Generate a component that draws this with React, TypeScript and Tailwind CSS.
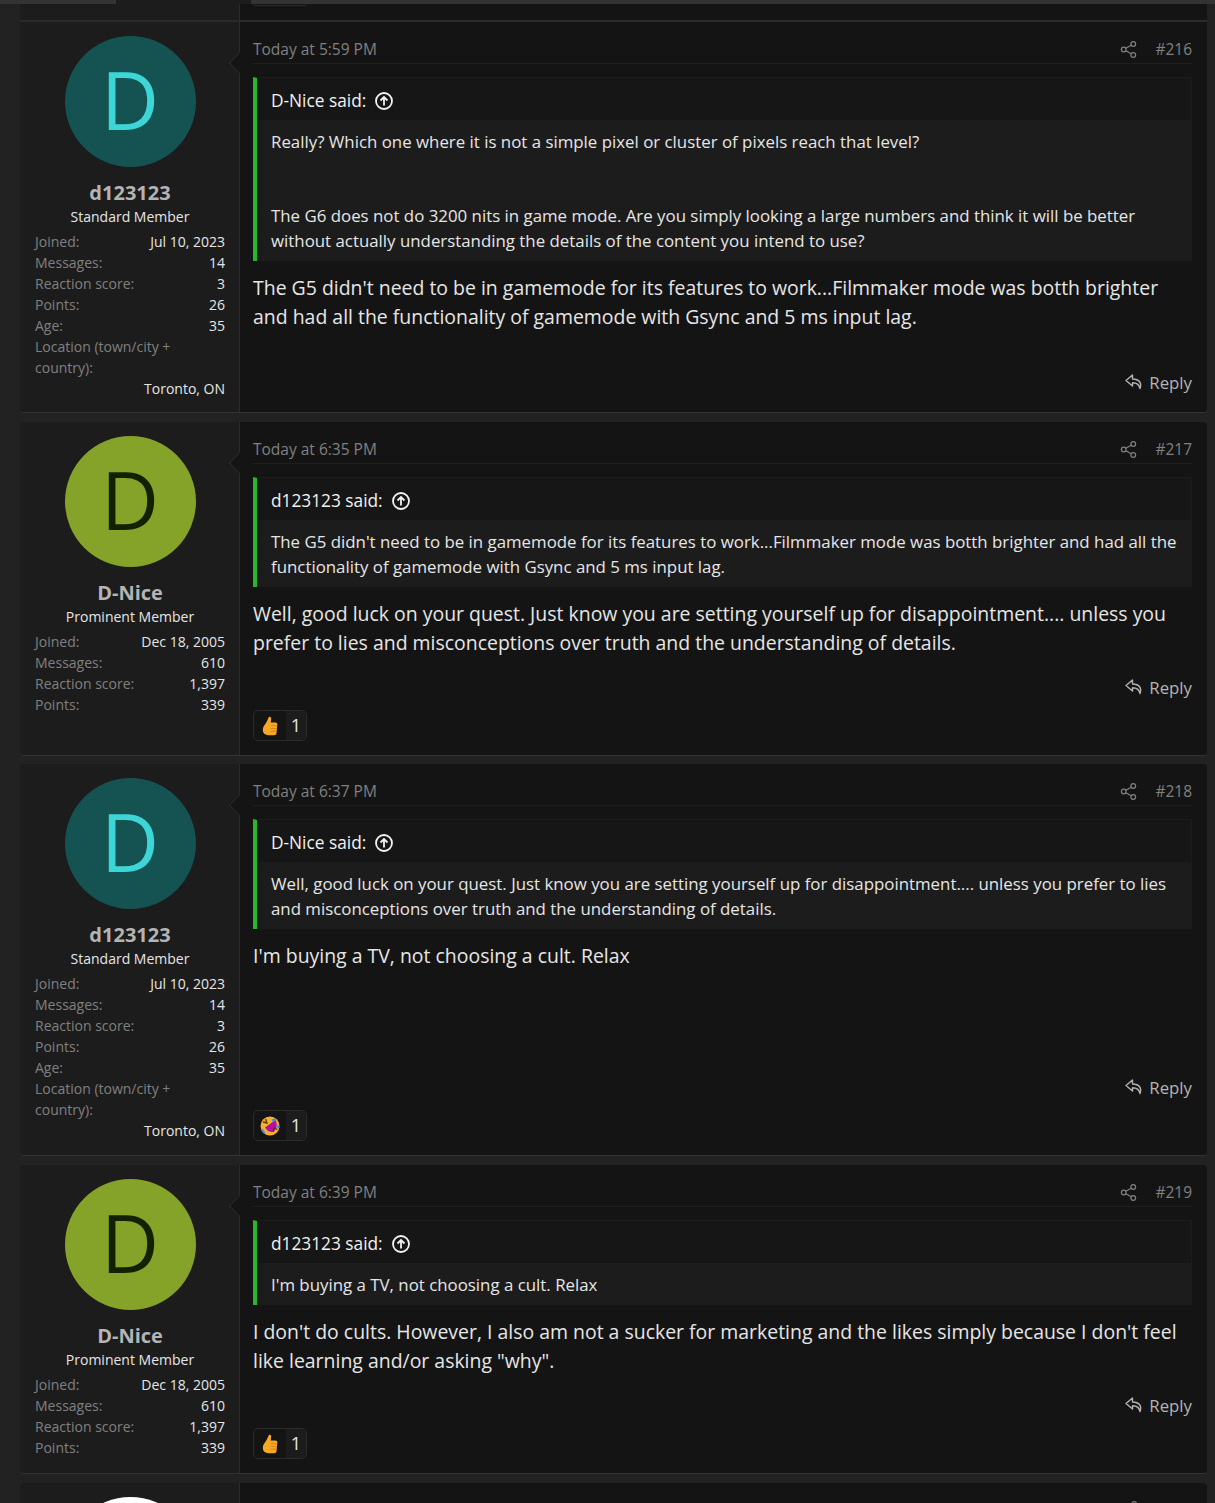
import { Share2 } from "lucide-react";

const font = "font-['Segoe_UI','Open_Sans','Noto_Sans',sans-serif]";

type Stat = [string, string];

const teal = {
  name: "d123123",
  title: "Standard Member",
  bg: "bg-[#155252]",
  fg: "text-[#3dd5d5]",
  stats: [
    ["Joined:", "Jul 10, 2023"],
    ["Messages:", "14"],
    ["Reaction score:", "3"],
    ["Points:", "26"],
    ["Age:", "35"],
  ] as Stat[],
  location: "Toronto, ON",
};

const olive = {
  name: "D-Nice",
  title: "Prominent Member",
  bg: "bg-[#85a329]",
  fg: "text-[#142100]",
  stats: [
    ["Joined:", "Dec 18, 2005"],
    ["Messages:", "610"],
    ["Reaction score:", "1,397"],
    ["Points:", "339"],
  ] as Stat[],
};

type User = typeof olive & { location?: string };

function UserCell({ user }: { user: User }) {
  return (
    <div className="relative flex w-[220px] shrink-0 flex-col border-r border-[#2b2b2b] bg-[#1c1c1c] pt-3.5 pr-[14px] pl-[15px]">
      <div className={`mx-auto flex h-[131px] w-[131px] items-center justify-center rounded-full pb-[6px] ${user.bg} ${user.fg} text-[80px] leading-none`}>
        D
      </div>
      <div className="mt-[14px] text-center text-[20px] leading-[24px] font-bold text-[#b4b4b4]">{user.name}</div>
      <div className="mt-px text-center text-[14px] leading-[21px] text-[#e6e6e6]">{user.title}</div>
      <div className="mt-[4px] text-[14px] leading-[21px]">
        {user.stats.map(([label, value]) => (
          <div key={label} className="flex justify-between">
            <span className="text-[#808080]">{label}</span>
            <span className="text-[#e6e6e6]">{value}</span>
          </div>
        ))}
        {user.location && (
          <>
            <div className="text-[#808080]">
              Location (town/city +<br />
              country):
            </div>
            <div className="text-right text-[#e6e6e6]">{user.location}</div>
          </>
        )}
      </div>
      <div className="absolute top-[29px] right-[-1px] h-[24px] w-[12px] overflow-hidden">
        <div className="absolute top-[4px] left-[4px] h-4 w-4 rotate-45 border-b border-l border-[#2b2b2b] bg-[#141414]" />
      </div>
    </div>
  );
}

function Quote({ author, lines }: { author: string; lines: React.ReactNode }) {
  return (
    <div className="mt-[13px] border-t border-r border-[#1c1c1c] border-l-4 border-l-[#2bb52b] bg-[#1c1c1c]">
      <div className="flex h-[42px] items-center gap-[9px] bg-[#161616] pt-[3px] pl-3.5 text-[17.3px] text-[#f2f2f2]">
        <span>{author} said:</span>
        <svg width="18" height="18" viewBox="0 0 18 18" fill="none" stroke="#f2f2f2" strokeWidth="1.8">
          <circle cx="9" cy="9" r="8" />
          <path d="M9 13.5V5M5.5 8.5 9 5l3.5 3.5" />
        </svg>
      </div>
      <div className="px-3.5 pt-[9px] pb-[8px] text-[16.85px] leading-[25px] text-[#e6e6e6]">{lines}</div>
    </div>
  );
}

function Reaction({ emoji }: { emoji: "thumb" | "rofl" }) {
  return (
    <div className="flex h-[31px] w-[54px] overflow-hidden rounded-[5px] border border-[#2b2b2b] bg-[#141414]">
      <div className="flex w-[32px] items-center justify-center">
        {emoji === "thumb" ? (
          <svg width="16" height="20" viewBox="0 0 16 20">
            <path d="M7 .8c1.400-.6 2.400.5 2.200 2L8.700 6.500h4.800c1.300 0 2 1 1.800 2.200l-.8 8.500c-.2 1.300-1 2-2.400 2H6.500C3 19.200.8 17 .8 14c0-2.500 1-4 2.500-6C4.800 6 6 3 7 .8Z" fill="#f6a825" />
            <path d="M8.500 9.800h6.600M8.500 12.500h6.300M8.500 15.200h6" stroke="#d9861a" strokeWidth="1" />
          </svg>
        ) : (
          <svg width="20" height="20" viewBox="0 0 20 20">
            <circle cx="10" cy="10" r="9.500" fill="#f7b02c" />
            <path d="M5 11.500 15.500 4c1.800 4 1.800 8-1 11-2.500 2.300-6.500 1-9.500-3.500Z" fill="#b3109e" />
            <path d="m3 6 4 1-1.500-4M13 16l1-4 3.500 1.500" fill="none" stroke="#5a3a10" strokeWidth="1.300" />
            <path d="M12 4.500 16 3M16.500 9 19 12M1.500 13l3 4" stroke="#3f8ee8" strokeWidth="2" />
          </svg>
        )}
      </div>
      <div className="flex flex-1 items-center justify-center bg-[#1c1c1c] text-[18px] text-[#e6e6e6]">1</div>
    </div>
  );
}

function ReplyGlyph() {
  return (
    <svg width="18" height="16" viewBox="0 0 18 16" fill="none" stroke="#b4b4b4" strokeWidth="1.4" strokeLinejoin="round">
      <path d="M7.500 1 1 6.500 7.500 12V8.800c3.800 0 6.500.9 7.500 5.700 2-5.500-.5-9.300-7.500-9.500Z" />
    </svg>
  );
}

function Post({
  user,
  time,
  num,
  author,
  quote,
  body,
  box,
  emoji,
}: {
  user: User;
  time: string;
  num: string;
  author: string;
  quote: React.ReactNode;
  body: React.ReactNode;
  box: string;
  emoji?: "thumb" | "rofl";
}) {
  return (
    <article className={`mx-[20px] flex w-[1187px] overflow-hidden rounded-[4px] border-b border-[#333333] ${box}`}>
      <UserCell user={user} />
      <div className="flex min-w-0 flex-1 flex-col bg-[#141414] pr-[15px] pl-[13px]">
        <header className="mt-[14px] flex h-[28px] items-center justify-between border-b border-[#1f1f1f] text-[15.5px] text-[#808080]">
          <span>{time}</span>
          <span className="flex items-center gap-[17px]">
            <Share2 size={19} strokeWidth={1.5} />
            <span>{num}</span>
          </span>
        </header>
        <Quote author={author} lines={quote} />
        <div className="mt-[11.5px] text-[19.45px] leading-[29px] text-[#e6e6e6]">{body}</div>
        <div className="mt-auto">
          <div className="flex items-center justify-end gap-[6px] text-[16.8px] text-[#b4b4b4]">
            <ReplyGlyph />
            Reply
          </div>
          {emoji ? (
            <div className="mt-[10px] mb-[14px]">
              <Reaction emoji={emoji} />
            </div>
          ) : (
            <div className="h-[17px]" />
          )}
        </div>
      </div>
    </article>
  );
}

export default function App() {
  return (
    <div className={`h-[1503px] overflow-hidden bg-[#222222] ${font}`}>
      <div className="flex h-1 bg-[#333333]">
        <div className="ml-[116px] w-[135px] bg-[#1c1c1c]" />
      </div>
      <div className="mx-[20px] flex h-[16px] w-[1187px]">
        <div className="w-[220px] shrink-0 border-r border-[#2b2b2b] bg-[#1c1c1c]" />
        <div className="flex-1 bg-[#141414]">
          <div className="ml-[13px] h-[2px] w-[54px] rounded-b-[5px] border border-t-0 border-[#2b2b2b]" />
        </div>
      </div>
      <Post
        user={teal}
        time="Today at 5:59 PM"
        num="#216"
        author="D-Nice"
        box="h-[393px] rounded-t-none border-t-2 border-t-[#2b2b2b]"
        quote={
          <>
            <p>Really? Which one where it is not a simple pixel or cluster of pixels reach that level?</p>
            <p className="mt-[49px]">
              The G6 does not do 3200 nits in game mode. Are you simply looking a large numbers and think it will be better without actually understanding the details of the content you intend to use?
            </p>
          </>
        }
        body="The G5 didn't need to be in gamemode for its features to work...Filmmaker mode was botth brighter and had all the functionality of gamemode with Gsync and 5 ms input lag."
      />
      <Post
        user={olive}
        time="Today at 6:35 PM"
        num="#217"
        author="d123123"
        box="mt-[9px] h-[334px]"
        emoji="thumb"
        quote="The G5 didn't need to be in gamemode for its features to work...Filmmaker mode was botth brighter and had all the functionality of gamemode with Gsync and 5 ms input lag."
        body="Well, good luck on your quest. Just know you are setting yourself up for disappointment.... unless you prefer to lies and misconceptions over truth and the understanding of details."
      />
      <Post
        user={teal}
        time="Today at 6:37 PM"
        num="#218"
        author="D-Nice"
        box="mt-[8px] h-[392px]"
        emoji="rofl"
        quote="Well, good luck on your quest. Just know you are setting yourself up for disappointment.... unless you prefer to lies and misconceptions over truth and the understanding of details."
        body="I'm buying a TV, not choosing a cult. Relax"
      />
      <Post
        user={olive}
        time="Today at 6:39 PM"
        num="#219"
        author="d123123"
        box="mt-[9px] h-[309px]"
        emoji="thumb"
        quote="I'm buying a TV, not choosing a cult. Relax"
        body={'I don\'t do cults. However, I also am not a sucker for marketing and the likes simply because I don\'t feel like learning and/or asking "why".'}
      />
      <article className="mx-[20px] mt-[9px] flex h-[40px] w-[1187px] overflow-hidden rounded-t-[4px]">
        <div className="w-[220px] shrink-0 border-r border-[#2b2b2b] bg-[#1c1c1c] pt-3.5 pr-[14px] pl-[15px]">
          <div className="mx-auto h-[131px] w-[131px] rounded-full bg-white" />
        </div>
        <div className="flex flex-1 justify-end bg-[#141414] pt-[17px] pr-[68px] text-[#808080]">
          <Share2 size={19} strokeWidth={1.5} />
        </div>
      </article>
    </div>
  );
}
